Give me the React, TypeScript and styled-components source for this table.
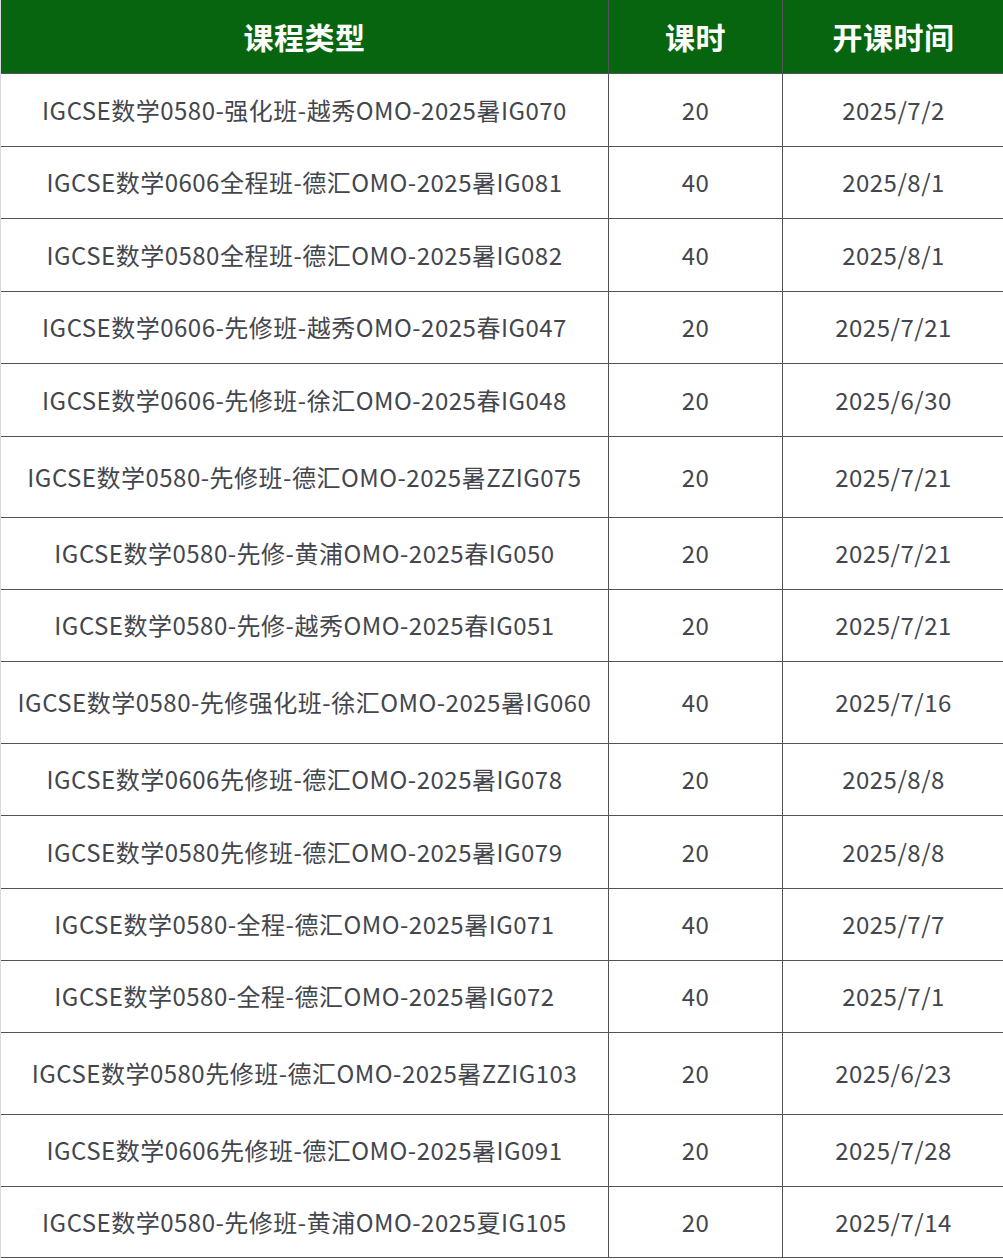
import React from "react";
import styled, { createGlobalStyle } from "styled-components";

const GlobalStyle = createGlobalStyle`
  html, body {
    margin: 0;
    padding: 0;
    background: #ffffff;
  }
  body {
    font-family: "Noto Sans CJK SC", "Noto Sans", sans-serif;
  }
`;

const Table = styled.div`
  width: 1003px;
  display: flex;
  flex-direction: column;
  border-left: 1px solid #d8d9dc;
`;

const Row = styled.div<{ $h: number; $head?: boolean }>`
  display: grid;
  grid-template-columns: 608px 174px 1fr;
  height: ${(p) => p.$h}px;
  box-sizing: border-box;
  border-bottom: 1px solid #50535a;
  background: ${(p) => (p.$head ? "#07650f" : "#ffffff")};
`;

const Cell = styled.div<{ $head?: boolean; $last?: boolean }>`
  display: flex;
  align-items: center;
  justify-content: center;
  box-sizing: border-box;
  border-right: ${(p) => (p.$last ? "none" : "1px solid #50535a")};
  color: ${(p) => (p.$head ? "#ffffff" : "#43464d")};
  font-size: ${(p) => (p.$head ? "30px" : "24px")};
  font-weight: ${(p) => (p.$head ? 600 : 400)};
  letter-spacing: 0.5px;
  white-space: nowrap;
  padding-bottom: 2px;
`;

const rows: [string, string, string, number][] = [
  ["IGCSE数学0580-强化班-越秀OMO-2025暑IG070", "20", "2025/7/2", 73],
  ["IGCSE数学0606全程班-德汇OMO-2025暑IG081", "40", "2025/8/1", 72],
  ["IGCSE数学0580全程班-德汇OMO-2025暑IG082", "40", "2025/8/1", 73],
  ["IGCSE数学0606-先修班-越秀OMO-2025春IG047", "20", "2025/7/21", 72],
  ["IGCSE数学0606-先修班-徐汇OMO-2025春IG048", "20", "2025/6/30", 73],
  ["IGCSE数学0580-先修班-德汇OMO-2025暑ZZIG075", "20", "2025/7/21", 81],
  ["IGCSE数学0580-先修-黄浦OMO-2025春IG050", "20", "2025/7/21", 72],
  ["IGCSE数学0580-先修-越秀OMO-2025春IG051", "20", "2025/7/21", 72],
  ["IGCSE数学0580-先修强化班-徐汇OMO-2025暑IG060", "40", "2025/7/16", 82],
  ["IGCSE数学0606先修班-德汇OMO-2025暑IG078", "20", "2025/8/8", 72],
  ["IGCSE数学0580先修班-德汇OMO-2025暑IG079", "20", "2025/8/8", 73],
  ["IGCSE数学0580-全程-德汇OMO-2025暑IG071", "40", "2025/7/7", 72],
  ["IGCSE数学0580-全程-德汇OMO-2025暑IG072", "40", "2025/7/1", 72],
  ["IGCSE数学0580先修班-德汇OMO-2025暑ZZIG103", "20", "2025/6/23", 82],
  ["IGCSE数学0606先修班-德汇OMO-2025暑IG091", "20", "2025/7/28", 72],
  ["IGCSE数学0580-先修班-黄浦OMO-2025夏IG105", "20", "2025/7/14", 71],
];

export default function App() {
  return (
    <>
      <GlobalStyle />
      <Table>
        <Row $h={74} $head>
          <Cell $head>课程类型</Cell>
          <Cell $head>课时</Cell>
          <Cell $head $last>开课时间</Cell>
        </Row>
        {rows.map(([name, hours, date, h]) => (
          <Row key={name} $h={h}>
            <Cell>{name}</Cell>
            <Cell>{hours}</Cell>
            <Cell $last>{date}</Cell>
          </Row>
        ))}
      </Table>
    </>
  );
}
